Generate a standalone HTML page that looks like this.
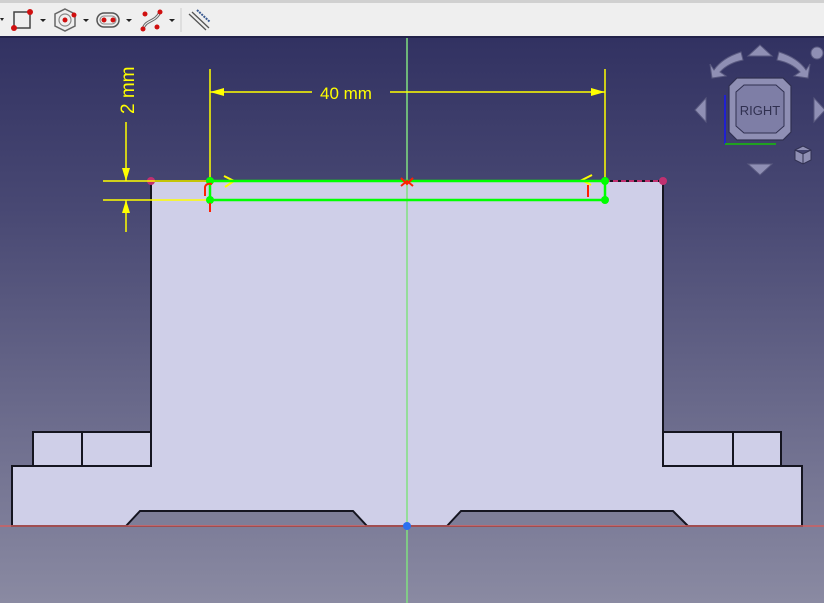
<!DOCTYPE html>
<html><head><meta charset="utf-8"><style>
html,body{margin:0;padding:0;width:824px;height:603px;overflow:hidden;font-family:"Liberation Sans",sans-serif}
#tb{position:absolute;left:0;top:0;width:824px;height:36px;background:#efefef;border-bottom:2px solid #22224a;border-top:3px solid #d0d0d0;box-sizing:border-box;height:38px}
#vp{position:absolute;left:0;top:38px;width:824px;height:565px;background:linear-gradient(#323262,#484873 30%,#6e6e8e 70%,#8a8aa2)}
</style></head><body>
<div id="tb">
<svg width="240" height="36" viewBox="0 3 240 36" style="position:absolute;left:0;top:0">
<polygon points="0,18 4,18 2,21" fill="#222"/>
<rect x="14" y="12" width="16" height="16" fill="none" stroke="#444" stroke-width="1.5"/>
<circle cx="14" cy="28" r="3" fill="#d01010"/><circle cx="30" cy="12" r="3" fill="#d01010"/>
<polygon points="40,19 46,19 43,22" fill="#222"/>
<polygon points="65,9 75,14 75,26 65,31 55,26 55,14" fill="none" stroke="#666" stroke-width="1.5"/>
<circle cx="65" cy="20" r="6" fill="none" stroke="#888" stroke-width="1.2"/>
<circle cx="65" cy="20" r="2.5" fill="#d01010"/><circle cx="74" cy="15" r="2.5" fill="#d01010"/>
<polygon points="83,19 89,19 86,22" fill="#222"/>
<rect x="97" y="13" width="22" height="14" rx="7" fill="none" stroke="#555" stroke-width="1.5"/>
<rect x="100" y="16" width="16" height="8" rx="4" fill="none" stroke="#888" stroke-width="1"/>
<circle cx="104" cy="20" r="2.5" fill="#d01010"/><circle cx="113" cy="20" r="2.5" fill="#d01010"/>
<polygon points="126,19 132,19 129,22" fill="#222"/>
<path d="M143,29 C146,19 155,23 160,12" fill="none" stroke="#666" stroke-width="3"/>
<path d="M143,29 C146,19 155,23 160,12" fill="none" stroke="#eee" stroke-width="1"/>
<circle cx="143" cy="29" r="2.5" fill="#d01010"/><circle cx="160" cy="12" r="2.5" fill="#d01010"/>
<circle cx="145" cy="14" r="2.5" fill="#d01010"/><circle cx="157" cy="27" r="2.5" fill="#d01010"/>
<polygon points="169,19 175,19 172,22" fill="#222"/>
<line x1="181" y1="8" x2="181" y2="32" stroke="#ccc"/>
<path d="M189,14 L206,30 M192,12 L209,28" stroke="#555" stroke-width="1.3"/>
<line x1="197" y1="10" x2="210" y2="22" stroke="#3a5a90" stroke-width="2" stroke-dasharray="2,1"/>
</svg>
</div>
<div id="vp">
<svg width="824" height="565" viewBox="0 38 824 565" style="position:absolute;left:0;top:0">
<g stroke="#151520" stroke-width="2" fill="#cfcfe8">
<rect x="33" y="432" width="118" height="34"/>
<rect x="663" y="432" width="118" height="34"/>
<path d="M12,526 L12,466 L151,466 L151,181 L663,181 L663,466 L802,466 L802,526 Z"/>
<line x1="82" y1="432" x2="82" y2="466"/><line x1="733" y1="432" x2="733" y2="466"/>
</g>
<g fill="#7e7e98" stroke="#151520" stroke-width="2">
<path d="M126,526 L140,511 L353,511 L367,526"/>
<path d="M447,526 L461,511 L673,511 L688,526"/>
</g>
<line x1="0" y1="526" x2="824" y2="526" stroke="#d06060" stroke-width="1.5"/>
<line x1="407" y1="38" x2="407" y2="603" stroke="#80e080" stroke-width="1.5"/>
<circle cx="407" cy="526" r="4" fill="#2a70f0"/>
<line x1="605" y1="181" x2="663" y2="181" stroke="#c03070" stroke-width="2" stroke-dasharray="5,3"/>
<circle cx="663" cy="181" r="4" fill="#c03070"/>
<circle cx="151" cy="181" r="4" fill="#c03070"/>
<g stroke="#ffff00" stroke-width="1.5" fill="#ffff00">
<line x1="103" y1="181" x2="210" y2="181"/><line x1="103" y1="200" x2="210" y2="200"/>
<line x1="126" y1="122" x2="126" y2="181"/><line x1="126" y1="200" x2="126" y2="232"/>
<polygon points="122,168 130,168 126,181" stroke="none"/><polygon points="122,213 130,213 126,200" stroke="none"/>
<line x1="210" y1="69" x2="210" y2="181"/><line x1="605" y1="69" x2="605" y2="181"/>
<line x1="210" y1="92" x2="312" y2="92"/><line x1="390" y1="92" x2="605" y2="92"/>
<polygon points="210,92 224,88 224,96" stroke="none"/><polygon points="605,92 591,88 591,96" stroke="none"/>
<path d="M224,176 L234,181 L225,187 M592,175 L582,180 L591,185" fill="none" stroke-width="2"/>
</g>
<text x="320" y="99" fill="#ffff00" font-size="17">40 mm</text>
<text transform="translate(134,114) rotate(-90)" fill="#ffff00" font-size="19">2 mm</text>
<g stroke="#00ff00" stroke-width="2.5">
<line x1="210" y1="181" x2="605" y2="181"/><line x1="210" y1="200" x2="605" y2="200"/>
<line x1="210" y1="181" x2="210" y2="200"/><line x1="605" y1="181" x2="605" y2="200"/>
</g>
<g fill="#00ff00"><circle cx="210" cy="181" r="4"/><circle cx="210" cy="200" r="4"/><circle cx="605" cy="181" r="4"/><circle cx="605" cy="200" r="4"/></g>
<g stroke="#ff2000" stroke-width="2" fill="none">
<path d="M205,196 L205,187 Q206,183 212,184"/><line x1="210" y1="203" x2="210" y2="212"/>
<line x1="588" y1="185" x2="588" y2="197"/>
<path d="M401,178 L407,184 L413,178 M401,186 L407,181 L413,186"/>
</g>
<g fill="#8f8fb4" stroke="#5a5a80" stroke-width="1">
<polygon points="760,45 748,56 772,56"/><polygon points="760,175 748,164 772,164"/>
<polygon points="695,110 706,98 706,122"/><polygon points="825,110 814,98 814,122"/>
<path d="M741,52 Q722,58 714,70 L710,64 L712,78 L726,76 L720,72 Q728,63 743,60 Z"/>
<path d="M779,52 Q798,58 806,70 L810,64 L808,78 L794,76 L800,72 Q792,63 777,60 Z"/>
<path d="M737,78 L783,78 L791,86 L791,132 L783,140 L737,140 L729,132 L729,86 Z" stroke="#303050" stroke-width="1.2"/>
<path d="M744,85 L776,85 L784,92 L784,126 L776,133 L744,133 L736,126 L736,92 Z" fill="#7e7ea6" stroke="#303050"/>
<circle cx="817" cy="53" r="6"/>
<path d="M795,150 L803,146 L811,150 L811,160 L803,164 L795,160 Z M795,150 L803,154 L811,150 M803,154 L803,164" stroke="#303050"/>
</g>
<text x="760" y="115" fill="#303050" font-size="13" text-anchor="middle">RIGHT</text>
<line x1="725" y1="95" x2="725" y2="144" stroke="#2020d0" stroke-width="2"/>
<line x1="725" y1="144" x2="776" y2="144" stroke="#20a020" stroke-width="2"/>
</svg>
</div>
</body></html>
